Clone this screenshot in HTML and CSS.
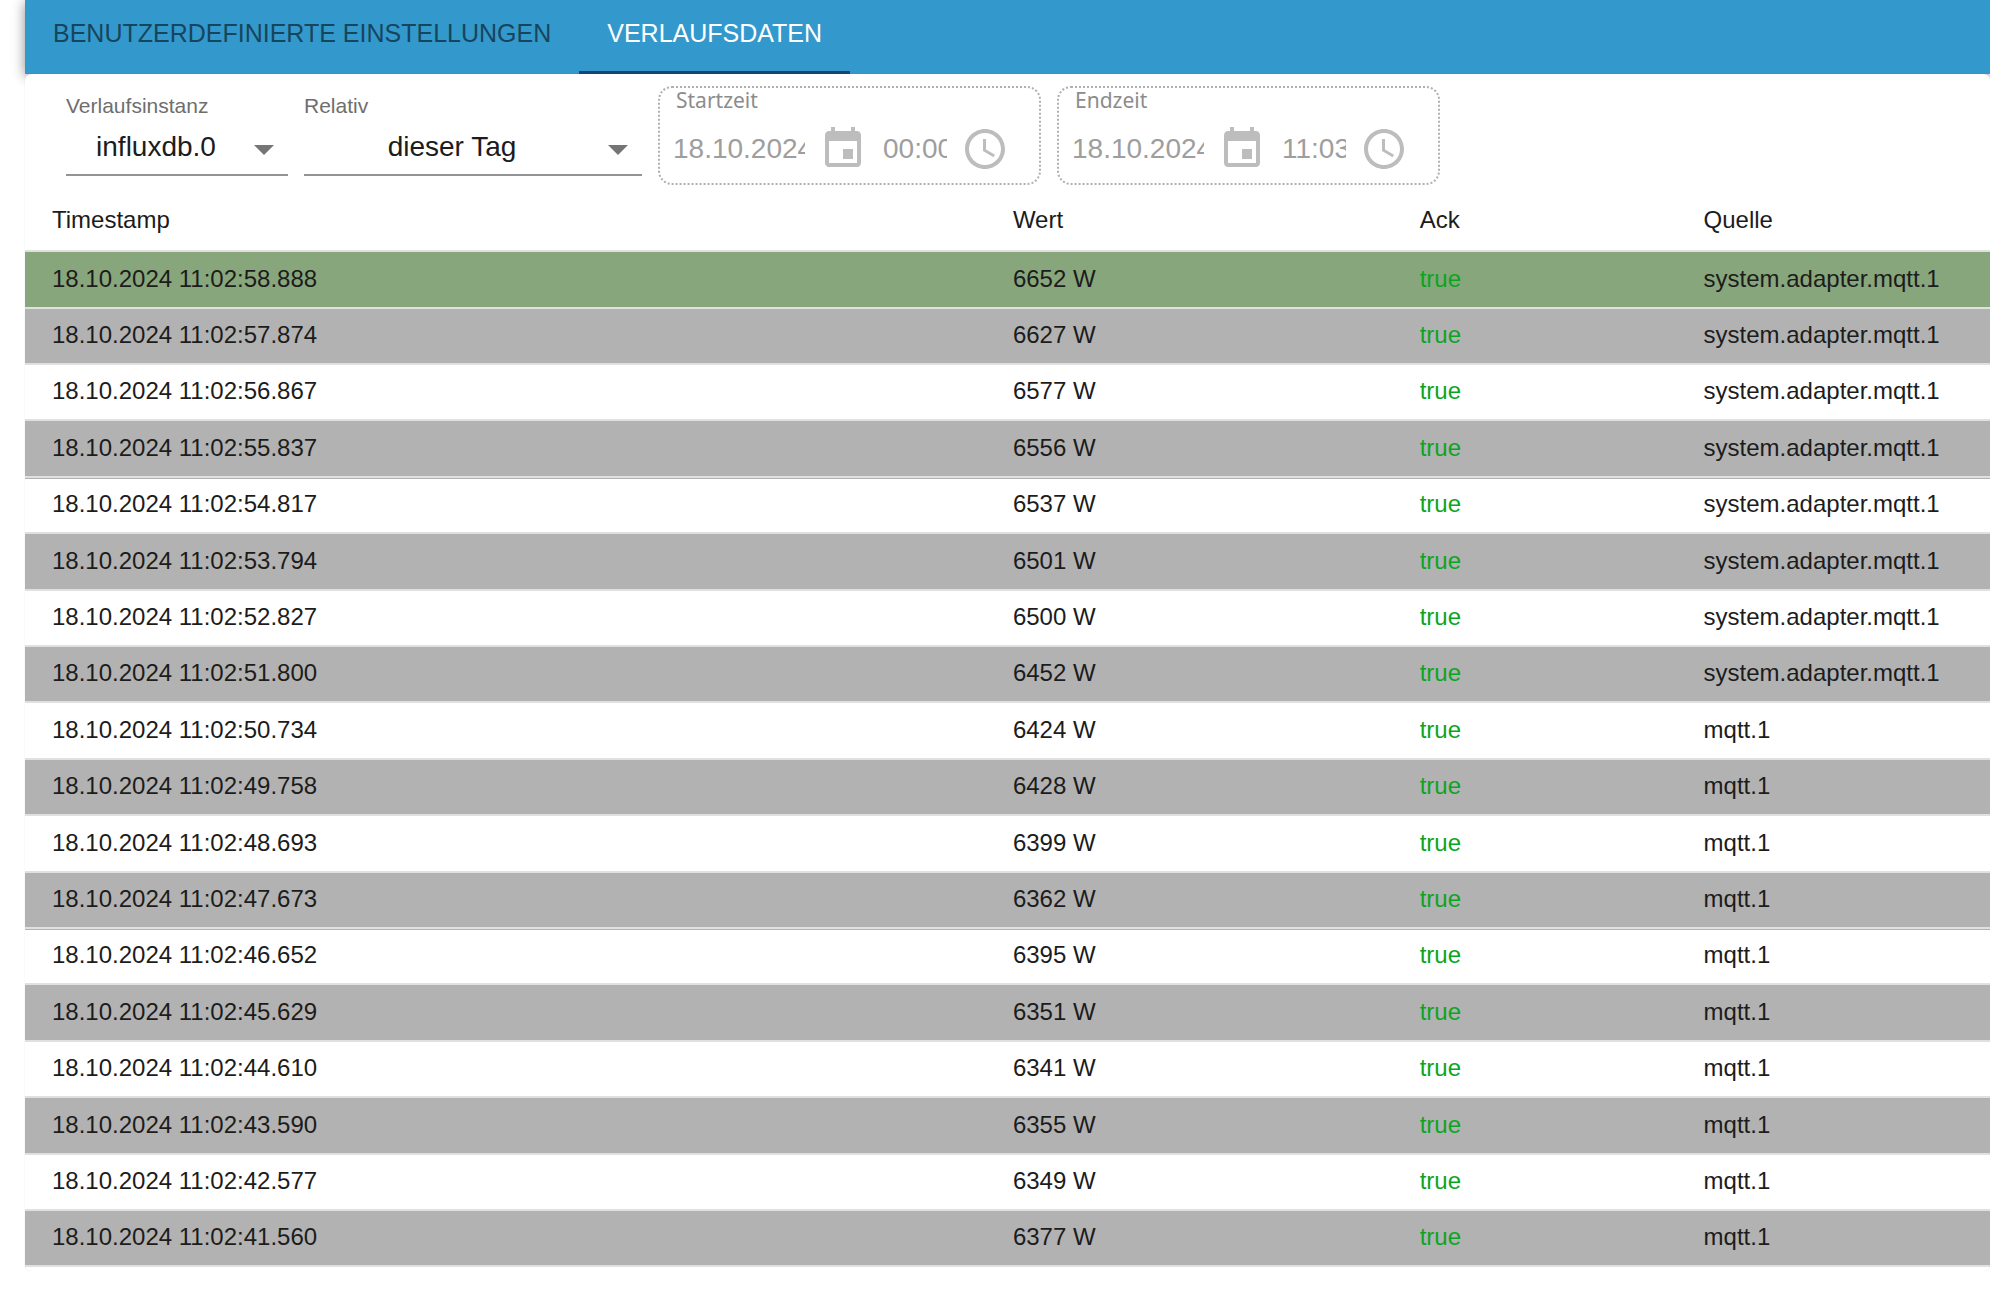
FILE: index.html
```html
<!DOCTYPE html>
<html lang="de">
<head>
<meta charset="utf-8">
<title>Verlaufsdaten</title>
<link rel="stylesheet" href="styles.css">
</head>
<body>
<main class="dialog">
  <nav class="tabs" role="tablist">
    <button class="tab" type="button" role="tab" aria-selected="false">BENUTZERDEFINIERTE EINSTELLUNGEN</button>
    <button class="tab tab-active" type="button" role="tab" aria-selected="true">VERLAUFSDATEN</button>
  </nav>
  <section class="panel">
    <form class="toolbar">
      <div class="field field-instance">
        <label for="instance">Verlaufsinstanz</label>
        <div class="select-wrap"><select id="instance"><option>influxdb.0</option></select></div>
      </div>
      <div class="field field-relative">
        <label for="relative">Relativ</label>
        <div class="select-wrap"><select id="relative"><option>dieser Tag</option></select></div>
      </div>
      <div class="range" role="group" aria-labelledby="start-label">
        <label class="range-label" id="start-label" for="start-date">Startzeit</label>
        <div class="range-row">
          <input class="date" id="start-date" type="text" value="18.10.2024" disabled>
          <svg class="icon" viewBox="0 0 24 24"><path d="M17 12h-5v5h5v-5zM16 1v2H8V1H6v2H5c-1.11 0-1.99.9-1.99 2L3 19c0 1.1.89 2 2 2h14c1.1 0 2-.9 2-2V5c0-1.1-.9-2-2-2h-1V1h-2zm3 18H5V8h14v11z"/></svg>
          <input class="time" type="text" value="00:00" aria-label="Startzeit Uhrzeit" disabled>
          <svg class="icon" viewBox="0 0 24 24"><path d="M11.99 2C6.47 2 2 6.48 2 12s4.47 10 9.99 10C17.52 22 22 17.52 22 12S17.52 2 11.99 2zM12 20c-4.42 0-8-3.58-8-8s3.58-8 8-8 8 3.58 8 8-3.58 8-8 8z"/><path d="M12.5 7H11v6l5.25 3.15.75-1.23-4.500-2.670z"/></svg>
        </div>
      </div>
      <div class="range" role="group" aria-labelledby="end-label">
        <label class="range-label" id="end-label" for="end-date">Endzeit</label>
        <div class="range-row">
          <input class="date" id="end-date" type="text" value="18.10.2024" disabled>
          <svg class="icon" viewBox="0 0 24 24"><path d="M17 12h-5v5h5v-5zM16 1v2H8V1H6v2H5c-1.11 0-1.99.9-1.99 2L3 19c0 1.1.89 2 2 2h14c1.1 0 2-.9 2-2V5c0-1.1-.9-2-2-2h-1V1h-2zm3 18H5V8h14v11z"/></svg>
          <input class="time" type="text" value="11:03" aria-label="Endzeit Uhrzeit" disabled>
          <svg class="icon" viewBox="0 0 24 24"><path d="M11.99 2C6.47 2 2 6.48 2 12s4.47 10 9.99 10C17.52 22 22 17.52 22 12S17.52 2 11.99 2zM12 20c-4.42 0-8-3.58-8-8s3.58-8 8-8 8 3.58 8 8-3.58 8-8 8z"/><path d="M12.5 7H11v6l5.25 3.15.75-1.23-4.500-2.670z"/></svg>
        </div>
      </div>
    </form>
    <table class="history">
      <colgroup><col class="col-time"><col class="col-value"><col class="col-ack"><col></colgroup>
      <thead><tr><th>Timestamp</th><th>Wert</th><th>Ack</th><th>Quelle</th></tr></thead>
      <tbody>
        <tr class="current"><td>18.10.2024 11:02:58.888</td><td>6652 W</td><td class="ack">true</td><td>system.adapter.mqtt.1</td></tr>
        <tr><td>18.10.2024 11:02:57.874</td><td>6627 W</td><td class="ack">true</td><td>system.adapter.mqtt.1</td></tr>
        <tr><td>18.10.2024 11:02:56.867</td><td>6577 W</td><td class="ack">true</td><td>system.adapter.mqtt.1</td></tr>
        <tr><td>18.10.2024 11:02:55.837</td><td>6556 W</td><td class="ack">true</td><td>system.adapter.mqtt.1</td></tr>
        <tr><td>18.10.2024 11:02:54.817</td><td>6537 W</td><td class="ack">true</td><td>system.adapter.mqtt.1</td></tr>
        <tr><td>18.10.2024 11:02:53.794</td><td>6501 W</td><td class="ack">true</td><td>system.adapter.mqtt.1</td></tr>
        <tr><td>18.10.2024 11:02:52.827</td><td>6500 W</td><td class="ack">true</td><td>system.adapter.mqtt.1</td></tr>
        <tr><td>18.10.2024 11:02:51.800</td><td>6452 W</td><td class="ack">true</td><td>system.adapter.mqtt.1</td></tr>
        <tr><td>18.10.2024 11:02:50.734</td><td>6424 W</td><td class="ack">true</td><td>mqtt.1</td></tr>
        <tr><td>18.10.2024 11:02:49.758</td><td>6428 W</td><td class="ack">true</td><td>mqtt.1</td></tr>
        <tr><td>18.10.2024 11:02:48.693</td><td>6399 W</td><td class="ack">true</td><td>mqtt.1</td></tr>
        <tr><td>18.10.2024 11:02:47.673</td><td>6362 W</td><td class="ack">true</td><td>mqtt.1</td></tr>
        <tr><td>18.10.2024 11:02:46.652</td><td>6395 W</td><td class="ack">true</td><td>mqtt.1</td></tr>
        <tr><td>18.10.2024 11:02:45.629</td><td>6351 W</td><td class="ack">true</td><td>mqtt.1</td></tr>
        <tr><td>18.10.2024 11:02:44.610</td><td>6341 W</td><td class="ack">true</td><td>mqtt.1</td></tr>
        <tr><td>18.10.2024 11:02:43.590</td><td>6355 W</td><td class="ack">true</td><td>mqtt.1</td></tr>
        <tr><td>18.10.2024 11:02:42.577</td><td>6349 W</td><td class="ack">true</td><td>mqtt.1</td></tr>
        <tr><td>18.10.2024 11:02:41.560</td><td>6377 W</td><td class="ack">true</td><td>mqtt.1</td></tr>
      </tbody>
    </table>
  </section>
</main>
</body>
</html>
```
FILE: styles.css
```css
* { box-sizing: border-box; }

body {
  margin: 0;
  background: #fff;
  color: #1c1c1c;
  font-family: "Liberation Sans", Arial, sans-serif;
  font-size: 24px;
}

.dialog { padding-left: 25px; }

/* Tab bar */
.tabs {
  display: flex;
  height: 74px;
  background: #3399cc;
  box-shadow: 0 2px 12px rgba(0, 0, 0, 0.45);
}

.tab {
  padding: 0 28px 6px;
  border: 0;
  border-bottom: 3px solid transparent;
  background: none;
  color: #17455c;
  font: inherit;
  font-size: 25px;
  line-height: 28px;
  white-space: nowrap;
}

.tab-active {
  border-bottom-color: #164477;
  color: #fff;
}

.panel {
  position: relative;
  padding-bottom: 4px;
  border-radius: 6px;
  background: #fff;
  box-shadow: 0 0 1px rgba(0, 0, 0, 0.2);
}

/* Filter controls */
.toolbar {
  display: flex;
  align-items: flex-start;
  gap: 16px;
  padding: 12px 0 5px 41px;
}

.field {
  display: flex;
  flex-direction: column;
  padding-top: 8px;
}

.field-instance { width: 222px; }
.field-relative { width: 338px; }

.field label {
  color: #6e6e6e;
  font-size: 21px;
  line-height: 24px;
}

.select-wrap {
  position: relative;
  border-bottom: 2px solid #949494;
}

.select-wrap::after {
  content: "";
  position: absolute;
  top: 27px;
  right: 14px;
  border: 10px solid transparent;
  border-top-color: #757575;
  border-bottom: 0;
  pointer-events: none;
}

.select-wrap select {
  display: block;
  width: 100%;
  height: 56px;
  padding: 0 42px 0 0;
  border: 0;
  appearance: none;
  background: none;
  color: #1c1c1c;
  font: inherit;
  font-size: 28px;
  text-align: center;
  text-align-last: center;
}

.range {
  width: 383px;
  height: 99px;
  padding-left: 13px;
  border: 2px dotted #b0b0b0;
  border-radius: 14px;
}

.range-label {
  display: block;
  padding-left: 3px;
  color: #8c8c8c;
  font-family: "Noto Sans", "Open Sans", sans-serif;
  font-size: 21px;
  line-height: 24px;
}

.range-row {
  display: flex;
  align-items: center;
  gap: 14px;
  padding-top: 13px;
}

.range-row input {
  height: 32px;
  padding: 0;
  border: 0;
  background: none;
  color: #9e9e9e;
  font: inherit;
  font-size: 28px;
}

.range-row .date { width: 132px; }
.range-row .time { width: 66px; padding-left: 2px; }

.icon {
  flex: none;
  width: 48px;
  height: 48px;
  fill: #bdbdbd;
}

/* History table */
.history {
  width: 100%;
  border-collapse: separate;
  border-spacing: 0;
  table-layout: fixed;
}

.col-time { width: 48.9%; }
.col-value { width: 20.7%; }
.col-ack { width: 14.45%; }

.history th,
.history td {
  padding: 0 0 0 27px;
  border-bottom: 2px solid #e0e0e0;
  font-weight: normal;
  text-align: left;
  white-space: nowrap;
}

.history th { height: 62px; }
.history td { height: 56px; padding-bottom: 2px; }

.history tr:nth-child(5n + 1) td,
.history tr:nth-child(5n + 4) td { height: 57px; }

.history tbody tr:nth-child(even) { background: #b2b2b2; }
.history tbody tr:nth-child(8n + 5) { box-shadow: inset 0 1px #b2b2b2; }
.history tbody tr.current { background: #88a67b; }
.history .ack { color: #0aa520; }
```
